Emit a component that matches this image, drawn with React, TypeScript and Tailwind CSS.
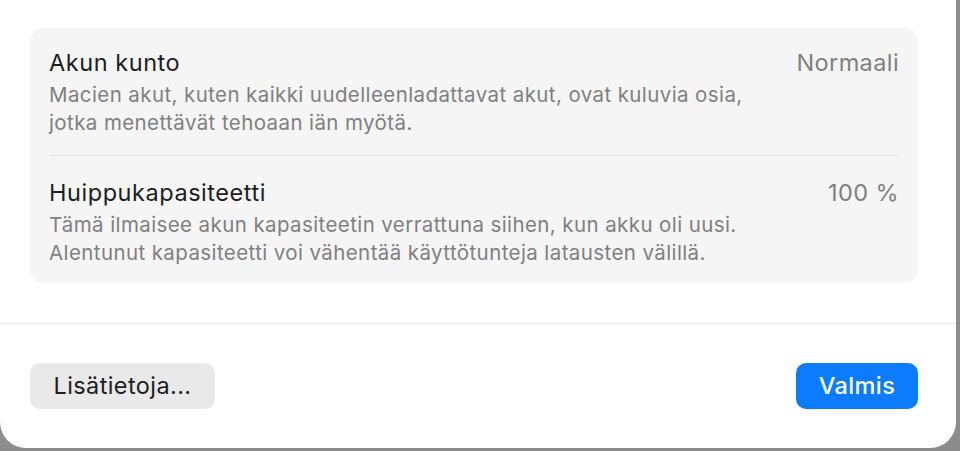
import React from "react";

const font = { fontFamily: "Inter, 'Noto Sans', 'Liberation Sans', sans-serif" };

function Row({ title, value, lines }: { title: string; value: string; lines: string[] }) {
  return (
    <div className="flex justify-between items-start">
      <div className="flex flex-col">
        <div className="text-[23.5px] leading-[30px] text-[#1d1d1f] tracking-[0.55px]">{title}</div>
        <div className="mt-[3px] text-[20.5px] leading-[28px] text-[#808080] tracking-[0.4px]">
          {lines.map((l) => (
            <div key={l}>{l}</div>
          ))}
        </div>
      </div>
      <div className="text-[23.5px] leading-[30px] text-[#808080] tracking-[0.4px]">{value}</div>
    </div>
  );
}

export default function App() {
  return (
    <div className="w-[960px] h-[451px] bg-[#8c8c8c] overflow-hidden" style={font}>
      <div className="w-[956px] h-[448px] bg-white rounded-b-[26px] flex flex-col">
        <div className="pl-[30px] pr-[38px] pt-[28px]">
          <div className="bg-[#f5f5f5] rounded-[14px] px-[19px] pt-[20px] pb-[16px]">
            <Row
              title="Akun kunto"
              value="Normaali"
              lines={[
                "Macien akut, kuten kaikki uudelleenladattavat akut, ovat kuluvia osia,",
                "jotka menettävät tehoaan iän myötä.",
              ]}
            />
            <div className="h-px bg-[#e3e3e3] mt-[18px] mb-[22px]" />
            <Row
              title="Huippukapasiteetti"
              value="100 %"
              lines={[
                "Tämä ilmaisee akun kapasiteetin verrattuna siihen, kun akku oli uusi.",
                "Alentunut kapasiteetti voi vähentää käyttötunteja latausten välillä.",
              ]}
            />
          </div>
        </div>
        <div className="h-px bg-[#e5e5e5] mt-[40px]" />
        <div className="flex justify-between pl-[30px] pt-[39px] pr-[38px]">
          <button className="h-[46px] w-[185px] rounded-[10px] bg-[#e9e9e9] text-[23.5px] text-[#1d1d1f] tracking-[0.4px]">
            Lisätietoja...
          </button>
          <button className="h-[46px] w-[122px] rounded-[10px] bg-[#0b7bff] text-[23.5px] text-white font-medium tracking-[0.4px]">
            Valmis
          </button>
        </div>
      </div>
    </div>
  );
}
